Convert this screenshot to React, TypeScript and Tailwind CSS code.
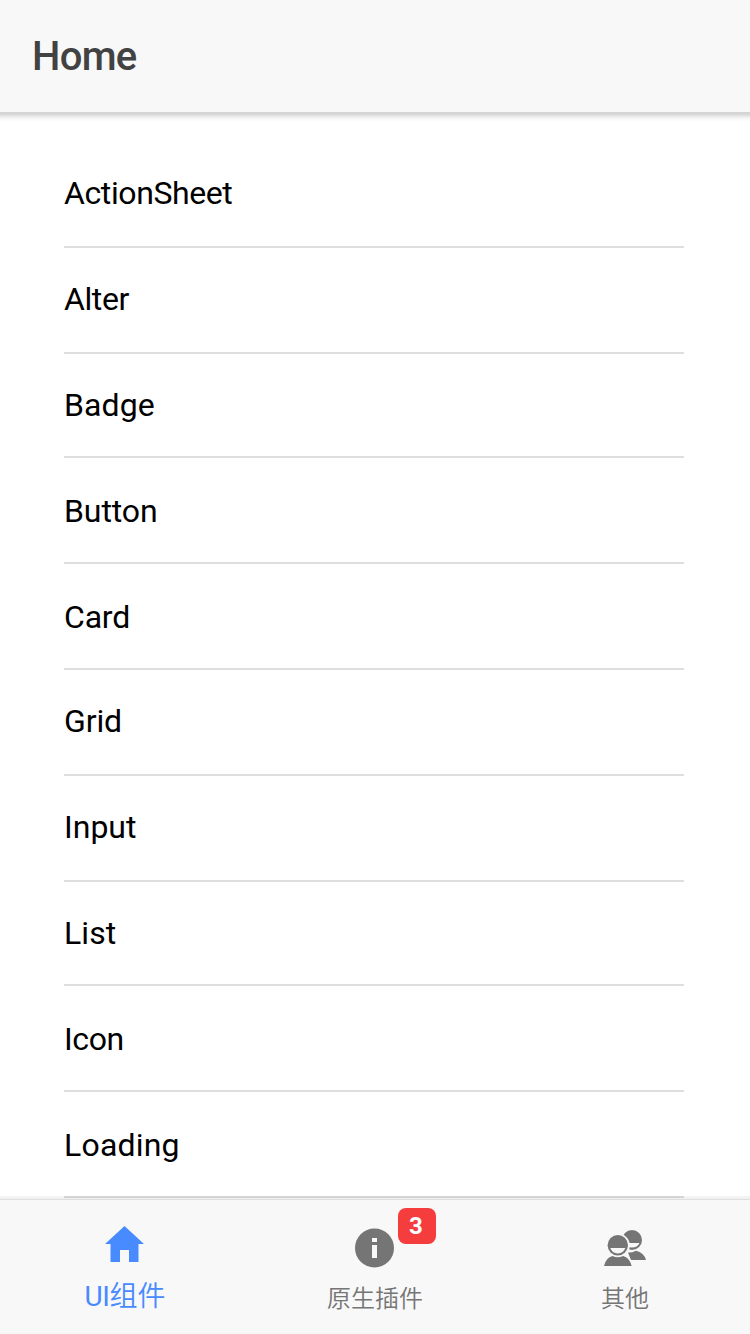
const items = [
  { name: "ActionSheet", row: "h-[106px] pt-[27px] tracking-[-0.4px]" },
  { name: "Alter", row: "h-[106px] pt-[27px] tracking-[-0.4px]" },
  { name: "Badge", row: "h-[104px] pt-[27px] tracking-[0.1px]" },
  { name: "Button", row: "h-[106px] pt-[29px] tracking-[-0.1px]" },
  { name: "Card", row: "h-[106px] pt-[29px] tracking-[-0.2px]" },
  { name: "Grid", row: "h-[106px] pt-[27px] tracking-[-0.1px]" },
  { name: "Input", row: "h-[106px] pt-[27px]" },
  { name: "List", row: "h-[104px] pt-[27px] tracking-[0.1px]" },
  { name: "Icon", row: "h-[106px] pt-[29px] tracking-[-0.4px]" },
  { name: "Loading", row: "h-[106px] pt-[29px] tracking-[0.2px]" },
];

function HomeIcon() {
  return (
    <svg className="h-[36px] w-[40px]" viewBox="0 0 40 36" fill="currentColor">
      <path d="M19.500 0 39 18H33.500V36H24V24H15V36H5.500V18H0Z" />
    </svg>
  );
}

function InfoIcon() {
  return (
    <svg className="h-[40px] w-[40px]" viewBox="0 0 40 40">
      <circle cx="19.500" cy="20" r="19.500" fill="currentColor" />
      <path d="M17 10H22V14H17ZM17 17H22V30H17Z" fill="#f8f8f8" />
    </svg>
  );
}

function PeopleIcon() {
  return (
    <svg className="h-[36px] w-[42px]" viewBox="0 0 42 36" fill="currentColor">
      <circle cx="28" cy="10" r="10" />
      <path d="M20 13H35.500Q33.500 17.500 28 17.500Q22 17.500 20 13Z" fill="#f8f8f8" />
      <path d="M24 22.500Q27 23 32 20.700Q40 22.500 42 30H27Z" />
      <circle cx="13.800" cy="15.500" r="12" fill="#f8f8f8" />
      <path d="M-2 38Q1 24 14 24Q27 24 30 38Z" fill="#f8f8f8" />
      <circle cx="13.800" cy="15.200" r="10.200" />
      <path d="M6.300 18H21.300Q19.500 23.400 13.800 23.400Q8 23.400 6.300 18Z" fill="#f8f8f8" />
      <path d="M0 36Q2 27.500 8.500 26Q13.800 28.500 19.100 26Q25.600 27.500 27.700 36Z" />
    </svg>
  );
}

export default function App() {
  return (
    <div className="flex h-[1334px] w-[750px] flex-col overflow-hidden bg-white font-['Roboto','Noto_Sans_CJK_SC',sans-serif]">
      <header className="z-10 flex h-[112px] shrink-0 items-center bg-[#f8f8f8] px-8 pt-[2px] text-[40px] font-medium tracking-[-0.7px] text-[#424242]">
        <h1>Home</h1>
      </header>
      <div className="h-[10px] shrink-0 bg-[linear-gradient(#d5d5d5_0px,#d5d5d5_2px,#dddddd_3px,#eeeeee_5px,#f9f9f9_7px,#ffffff_10px)]" />
      <main className="flex h-[1076px] shrink-0 flex-col overflow-hidden pt-[20px] pr-[66px] pl-16">
        {items.map((item) => (
          <div
            key={item.name}
            className={`${item.row} shrink-0 border-b-2 border-[#dedede] text-[32px] leading-[48px] text-black`}
          >
            {item.name}
          </div>
        ))}
      </main>
      <nav className="z-10 flex h-[136px] shrink-0 bg-[#f8f8f8] bg-[linear-gradient(#f0f0f0_0px,#f0f0f0_1px,#dfdfdf_1px,#dfdfdf_2px,#f8f8f8_2px)] pt-[2px] font-['Roboto','Noto_Sans_CJK_SC_DemiLight','Noto_Sans_CJK_SC',sans-serif] text-[#757575] shadow-[0_-2px_0_rgba(0,0,0,0.045)]">
        <a className="flex w-[250px] flex-col items-center pt-[26px] text-[#488aff]">
          <HomeIcon />
          <span className="mt-[15px] text-[28px] leading-[40px] font-light"><span className="font-normal tracking-[-0.3px]">UI</span>组件</span>
        </a>
        <a className="relative flex w-[250px] flex-col items-center pt-[28px]">
          <InfoIcon />
          <span className="mt-[13px] text-[24px] leading-[36px] font-light">原生插件</span>
          <span className="absolute top-[8px] left-[148px] flex h-[36px] w-[38px] items-center justify-center rounded-[8px] bg-[#f53d3d] pr-[2px] text-[24px] leading-none font-bold text-white">
            3
          </span>
        </a>
        <a className="flex w-[250px] flex-col items-center pt-[30px]">
          <PeopleIcon />
          <span className="mt-[15px] text-[24px] leading-[36px] font-light">其他</span>
        </a>
      </nav>
    </div>
  );
}
